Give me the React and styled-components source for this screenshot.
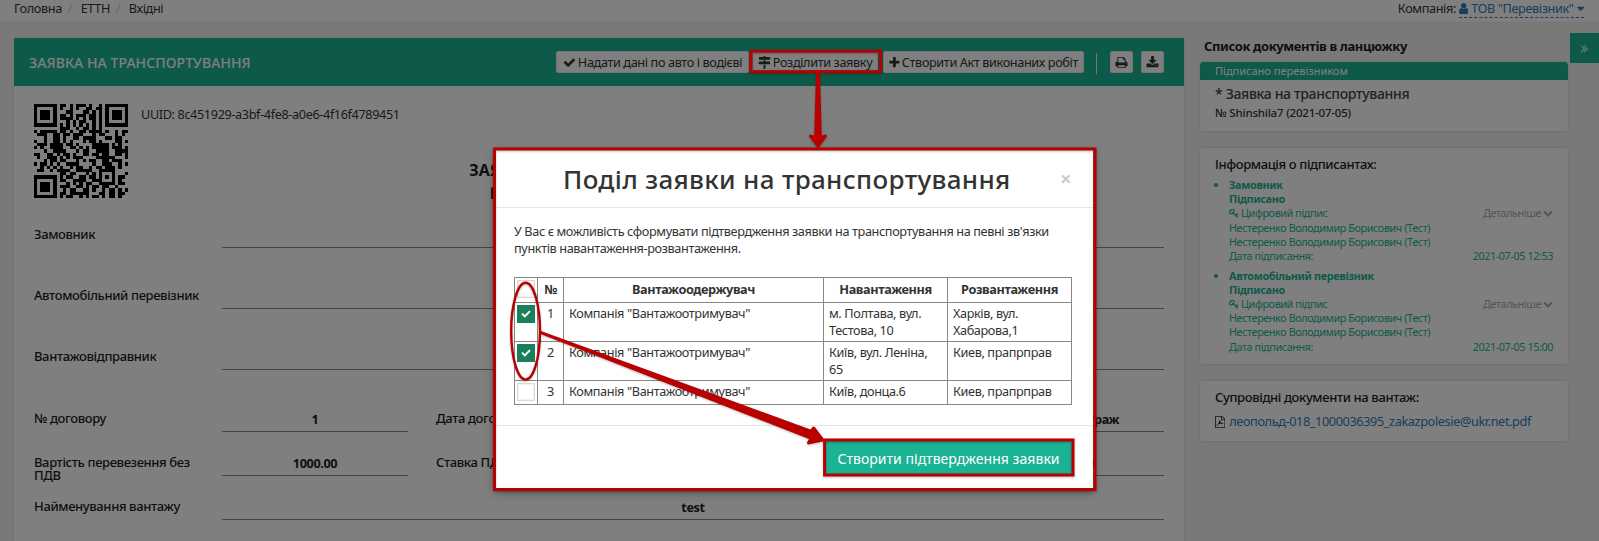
import React from "react";
import styled, { createGlobalStyle } from "styled-components";

const Global = createGlobalStyle`
  * { box-sizing: border-box; }
  html, body { margin: 0; height: 541px; overflow: hidden; }
  body {
    font-family: "Noto Sans", "Open Sans", sans-serif;
    font-size: 12.7px;
    line-height: 17px;
    letter-spacing: -0.38px;
    color: #333;
    background: #f3f3f4;
  }
`;

/* ---------- icons ---------- */

const ICONS = {
  check: "M1671 566q0 40-28 68l-724 724-136 136q-28 28-68 28t-68-28l-136-136-362-362q-28-28-28-68t28-68l136-136q28-28 68-28t68 28l294 295 656-657q28-28 68-28t68 28l136 136q28 28 28 68z",
  signs: "M1745 297q10 10 10 23t-10 23l-141 141q-28 28-68 28h-1344q-26 0-45-19t-19-45v-256q0-26 19-45t45-19h576v-64q0-26 19-45t45-19h128q26 0 45 19t19 45v64h512q40 0 68 28zm-977 919h256v512q0 26-19 45t-45 19h-128q-26 0-45-19t-19-45v-512zm832-448q26 0 45 19t19 45v256q0 26-19 45t-45 19h-1344q-40 0-68-28l-141-141q-10-10-10-23t10-23l141-141q28-28 68-28h512v-192h256v192h576z",
  plus: "M1600 736v192q0 40-28 68t-68 28h-416v416q0 40-28 68t-68 28h-192q-40 0-68-28t-28-68v-416h-416q-40 0-68-28t-28-68v-192q0-40 28-68t68-28h416v-416q0-40 28-68t68-28h192q40 0 68 28t28 68v416h416q40 0 68 28t28 68z",
  print: "M448 1536h896v-256h-896v256zm0-640h896v-384h-160q-40 0-68-28t-28-68v-160h-640v640zm1152 64q0-26-19-45t-45-19-45 19-19 45 19 45 45 19 45-19 19-45zm128 0v416q0 13-9.5 22.5t-22.5 9.5h-224v160q0 40-28 68t-68 28h-960q-40 0-68-28t-28-68v-160h-224q-13 0-22.5-9.5t-9.5-22.5v-416q0-79 56.5-135.5t135.5-56.5h64v-544q0-40 28-68t68-28h672q40 0 88 20t76 48l152 152q28 28 48 76t20 88v256h64q79 0 135.5 56.5t56.5 135.5z",
  download: "M1344 1344q0-26-19-45t-45-19-45 19-19 45 19 45 45 19 45-19 19-45zm256 0q0-26-19-45t-45-19-45 19-19 45 19 45 45 19 45-19 19-45zm128-224v320q0 40-28 68t-68 28h-1472q-40 0-68-28t-28-68v-320q0-40 28-68t68-28h465l135 136q58 56 136 56t136-56l136-136h464q40 0 68 28t28 68zm-325-569q17 41-14 70l-448 448q-18 19-45 19t-45-19l-448-448q-31-29-14-70 17-39 59-39h256v-448q0-26 19-45t45-19h256q26 0 45 19t19 45v448h256q42 0 59 39z",
  user: "M1536 1399q0 109-62.5 187t-150.5 78h-854q-88 0-150.5-78t-62.5-187q0-85 8.5-160.5t31.5-152 58.5-131 94-89 134.5-34.5q131 128 313 128t313-128q76 0 134.5 34.5t94 89 58.5 131 31.5 152 8.5 160.5zm-256-887q0 159-112.5 271.5t-271.5 112.5-271.5-112.5-112.5-271.5 112.5-271.5 271.5-112.5 271.5 112.5 112.5 271.5z",
  caret: "M1408 704q0 26-19 45l-448 448q-19 19-45 19t-45-19l-448-448q-19-19-19-45t19-45 45-19h896q26 0 45 19t19 45z",
  key: "M832 512q0-80-56-136t-136-56-136 56-56 136q0 42 19 83-41-19-83-19-80 0-136 56t-56 136 56 136 136 56 136-56 56-136q0-42-19-83 41 19 83 19 80 0 136-56t56-136zm851 704q0 17-49 66t-66 49q-9 0-28.5-16t-36.5-33-38.5-40-24.5-26l-96 96 220 220q28 28 28 68 0 42-39 81t-81 39q-40 0-68-28l-671-671q-176 131-365 131-163 0-265.5-102.5t-102.5-265.5q0-160 95-313t248-248 313-95q163 0 265.5 102.5t102.5 265.5q0 189-131 365l355 355 96-96q-3-3-26-24.5t-40-38.5-33-36.5-16-28.5q0-17 49-66t66-49q13 0 23 10 6 6 46 44.5t82 79.5 86.5 86 73 78 28.5 41z",
  chevron: "M1683 808l-742 741q-19 19-45 19t-45-19l-742-741q-19-19-19-45.5t19-45.5l166-165q19-19 45-19t45 19l531 531 531-531q19-19 45-19t45 19l166 165q19 19 19 45.5t-19 45.5z",
  pdf: "M1596 380q28 28 48 76t20 88v1152q0 40-28 68t-68 28h-1344q-40 0-68-28t-28-68v-1600q0-40 28-68t68-28h896q40 0 88 20t76 48zm-444-244v376h376q-10-29-22-41l-313-313q-12-12-41-22zm384 1528v-1024h-416q-40 0-68-28t-28-68v-416h-768v1536h1280zM800 640h110q20 230 110 330q110 110 330 130v90q-200 20-380-50q-170 20-330 90q-130 240-250 240l-50-60q60-130 230-220q160-250 230-550z",
  angles: "M979 960q0 13-10 23l-466 466q-10 10-23 10t-23-10l-50-50q-10-10-10-23t10-23l393-393-393-393q-10-10-10-23t10-23l50-50q10-10 23-10t23 10l466 466q10 10 10 23zm384 0q0 13-10 23l-466 466q-10 10-23 10t-23-10l-50-50q-10-10-10-23t10-23l393-393-393-393q-10-10-10-23t10-23l50-50q10-10 23-10t23 10l466 466q10 10 10 23z",
};

const Glyph = styled.svg`
  width: ${(p) => p.$w || p.$size}px;
  height: ${(p) => p.$size}px;
  flex: none;
  fill: currentColor;
`;

const Icon = ({ name, size = 13, trim = 0 }) => (
  <Glyph $size={size} $w={size * (1 - (2 * trim) / 1792)} viewBox={`${trim} 0 ${1792 - 2 * trim} 1792`}>
    <path d={ICONS[name]} />
  </Glyph>
);

/* ---------- page frame ---------- */

const Page = styled.div`
  position: relative;
  width: 1599px;
  height: 541px;
  overflow: hidden;
  white-space: nowrap;
`;

const TopBar = styled.div`
  display: flex;
  justify-content: space-between;
  height: 23px;
  padding: 0 15px 0 14px;
  background: #fff;
  border-bottom: 1px solid #e7eaec;
`;

const Breadcrumb = styled.div`
  display: flex;
  height: 17px;
  span + span::before { content: "/"; color: #ccc; padding: 0 8.500px 0 6px; }
`;

const Company = styled.div`
  display: flex;
  gap: 3px;
  height: 18px;
`;

const CompanyLink = styled.span`
  display: flex;
  align-items: center;
  gap: 3px;
  height: 18px;
  color: #337ab7;
  border-bottom: 1px dashed #337ab7;
`;

const Content = styled.div`
  display: flex;
  align-items: flex-start;
  gap: 16px;
  padding: 15px 31px 0 14px;
`;

const Panel = styled.main`
  width: 1170px;
  height: 520px;
  background: #fff;
  box-shadow: 0 0 3px #ddd;
`;

const PanelHeader = styled.header`
  display: flex;
  align-items: center;
  height: 48px;
  padding: 0 20px 0 15px;
  background: #1ab394;
  color: #fff;
`;

const PanelTitle = styled.h5`
  flex: 1;
  margin: 0;
  font-size: 14px;
  font-weight: 500;
  letter-spacing: 0.08px;
  text-transform: uppercase;
`;

const Tool = styled.button`
  display: flex;
  align-items: center;
  justify-content: center;
  gap: 2px;
  width: ${(p) => p.$w}px;
  height: 22px;
  margin: 0 0 0 ${(p) => p.$gap || 0}px;
  padding: 0;
  border: 1px solid #e7eaec;
  border-radius: 2px;
  background: #fff;
  color: #333;
  font: inherit;
  letter-spacing: inherit;
`;

const Divider = styled.i`
  width: 1px;
  height: 21px;
  margin: 2px 0 0 12px;
  background: #e7eaec;
`;

const PanelBody = styled.div`
  padding: 18px 20px 0;
`;

const Identity = styled.div`
  display: flex;
  gap: 13px;
  height: 55px;
  line-height: 21px;
`;

const Qr = styled.svg`
  width: 94px;
  height: 94px;
  flex: none;
`;

const Heading = styled.div`
  height: 69px;
  font-size: 16px;
  font-weight: 700;
  line-height: 23px;
  letter-spacing: 0;
  text-align: center;
  color: #222;
`;

const FieldRow = styled.div`
  display: flex;
  height: ${(p) => p.$h}px;
  line-height: 13px;
`;

const Label = styled.label`
  width: ${(p) => p.$w || 188}px;
  padding-right: 14px;
  margin-left: ${(p) => p.$gap || 0}px;
  font-size: 13px;
  font-weight: 500;
  color: #1c1c1c;
  white-space: normal;
`;

const Value = styled.div`
  ${(p) => (p.$w ? `width: ${p.$w}px;` : "flex: 1;")}
  height: 20px;
  padding-top: 1px;
  border-bottom: 1px solid #888;
  font-weight: 700;
  text-align: center;
  color: #222;
`;

/* ---------- sidebar ---------- */

const Sidebar = styled.aside`
  width: 368px;
`;

const SidebarTitle = styled.div`
  height: 24px;
  padding-left: 4px;
  font-size: 13px;
  font-weight: 700;
  line-height: 16px;
  letter-spacing: -0.38px;
  color: #222;
`;

const Card = styled.section`
  height: ${(p) => p.$h}px;
  margin-bottom: 17px;
  border-radius: 4px;
  background: #fff;
  box-shadow: 0 0 3px #ccc;
  overflow: hidden;
`;

const CardStatus = styled.div`
  height: 18px;
  padding-left: 15px;
  background: #1ab394;
  color: #fff;
  font-size: 11px;
  line-height: 18px;
  letter-spacing: 0;
`;

const CardBody = styled.div`
  padding: ${(p) => p.$top}px 15px 0;
`;

const DocName = styled.div`
  font-size: 14px;
  font-weight: 500;
  line-height: 20px;
  letter-spacing: -0.34px;
  color: #444;
`;

const DocNumber = styled.div`
  font-size: 11.5px;
  font-weight: 500;
  line-height: 17px;
  letter-spacing: -0.2px;
`;

const CardTitle = styled.div`
  height: ${(p) => p.$h}px;
  font-size: 13px;
  font-weight: 500;
  color: #1c1c1c;
`;

const Signers = styled.ul`
  margin: 0;
  padding: 0 0 0 14px;
  font-size: 10.8px;
  line-height: 14.2px;
  letter-spacing: -0.4px;
  color: #1ab394;
`;

const Signer = styled.li`
  margin-bottom: 5.6px;
  &::marker { font-size: 12px; }
`;

const SignLine = styled.div`
  display: flex;
  align-items: center;
  justify-content: space-between;
  height: 14.2px;
  font-weight: ${(p) => (p.$bold ? 700 : 400)};
  letter-spacing: ${(p) => (p.$bold ? "-0.3px" : "inherit")};
`;

const WithIcon = styled.span`
  display: flex;
  align-items: center;
  gap: 2px;
  color: ${(p) => (p.$muted ? "#aaa" : "inherit")};
`;

const FileLink = styled.div`
  display: flex;
  align-items: center;
  gap: 4px;
  color: #333;
  span { color: #337ab7; }
`;

const SideToggle = styled.div`
  position: absolute;
  right: 0;
  top: 33px;
  display: flex;
  align-items: center;
  justify-content: center;
  width: 29px;
  height: 30px;
  background: #1ab394;
  color: #fff;
`;

/* ---------- modal ---------- */

const Backdrop = styled.div`
  position: absolute;
  inset: 0;
  background: rgba(0, 0, 0, 0.5);
`;

const Modal = styled.div`
  position: absolute;
  left: 495px;
  top: 149px;
  width: 598px;
  height: 340px;
  background: #fff;
  box-shadow: 0 3px 9px rgba(0, 0, 0, 0.4);
  white-space: normal;
`;

const ModalHeader = styled.div`
  display: flex;
  align-items: center;
  height: 59px;
  padding: 2px 22px 0 68px;
  border-bottom: 1px solid #e5e5e5;
`;

const ModalTitle = styled.h4`
  flex: 1;
  margin: 0;
  font-size: 26px;
  font-weight: 500;
  line-height: 30px;
  letter-spacing: 0.34px;
  white-space: nowrap;
`;

const Close = styled.span`
  font-size: 20px;
  font-weight: 700;
  line-height: 20px;
  color: #ccc;
`;

const ModalBody = styled.div`
  height: 217px;
  padding: 15px 19px 0;
`;

const Intro = styled.p`
  height: 54px;
  margin: 0;
  line-height: 17px;
`;

const Table = styled.table`
  width: 558px;
  table-layout: fixed;
  border-collapse: collapse;
  line-height: 17px;
`;

const Cell = styled.td`
  height: ${(p) => p.$h}px;
  padding: ${(p) => (p.$box ? "2px 0 0 2px" : p.$head ? "3px 5px 0" : "2px 5px 0")};
  border: 1px solid #888;
  vertical-align: top;
  text-align: ${(p) => (p.$center ? "center" : "left")};
  font-weight: ${(p) => (p.$head ? 700 : 400)};
`;

const Checkbox = styled.span`
  display: flex;
  align-items: center;
  justify-content: center;
  width: 18px;
  height: 18px;
  border: 1px solid ${(p) => (p.$on ? "#1c7f5c" : "#ddd8d0")};
  background: ${(p) => (p.$on ? "#1c7f5c" : "#fff")};
  box-shadow: ${(p) => (p.$on ? "none" : "inset 0 0 0 1px #f5f2ee")};
`;

const ModalFooter = styled.div`
  display: flex;
  justify-content: flex-end;
  padding: 14px 21px 0;
  border-top: 1px solid #e5e5e5;
`;

const Submit = styled.button`
  width: 246px;
  height: 34px;
  padding: 2px 1px 0 0;
  border: 0;
  background: #1ab394;
  color: #fff;
  font: inherit;
  font-size: 14px;
  letter-spacing: 0.05px;
  white-space: nowrap;
`;

const Annotations = styled.svg`
  position: absolute;
  inset: 0;
  width: 1599px;
  height: 541px;
  filter: drop-shadow(0 1px 1px rgba(0, 0, 0, 0.25));
`;

/* ---------- data ---------- */

const QR_ROWS = [
  "#######.##.#.###.#..#.#######",
  "#.....#.#..#.#..##.##.#.....#",
  "#.###.#...##...##.#.#.#.###.#",
  "#.###.#.##.#.###.##.#.#.###.#",
  "#.###.#.####.#.#.##.#.#.###.#",
  "#.....#...#.#.##..#.#.#.....#",
  "#######.#.#.#.#.#.#.#.#######",
  "........###..#.##.#.#........",
  "#.#####.##.#..##.####.#..#.##",
  ".###..##.##.###...#.##...#.#.",
  "...#..##.#..##.####...##.##..",
  "#..#..##.#.#...#.##.#....##.#",
  ".###.####.##.#....#####.#.#..",
  "#.#..####..##.#.#.#####.###.#",
  "...#..####...#.##..####..####",
  "##..##.#.##.#..##.##.##..##.#",
  ".#..###.#.#.###....######...#",
  "...#.##.##...#.#.##..##.###..",
  "#.##.#.#..####....#..###..#.#",
  "..#.#.#.#..#.##..#.##.###.#..",
  ".##..#.####..#####..#####....",
  "........##.##...#.#.#...#...#",
  "#######.#.##..##.##.#.#.#.##.",
  "#.....#.##..####..###...#.#..",
  "#.###.#...#.#.#.##..#####.##.",
  "#.###.#.###..##.#.##.##..#...",
  "#.###.#..#.##..##.#..#.##.#.#",
  "#.....#.##.######...##.##.##.",
  "#######.#.##..#.#.##.#.##.#..",
];

const ROWS = [
  { on: true, n: 1, h: 39, from: "м. Полтава, вул. Тестова, 10", to: "Харків, вул. Хабарова,1" },
  { on: true, n: 2, h: 39, from: "Київ, вул. Леніна, 65", to: "Киев, прапрправ" },
  { on: false, n: 3, h: 24, from: "Київ, донца.6", to: "Киев, прапрправ" },
];

const SIGNERS = [
  { role: "Замовник", date: "2021-07-05 12:53" },
  { role: "Автомобільний перевізник", date: "2021-07-05 15:00" },
];

const SIGNER_NAME = "Нестеренко Володимир Борисович (Тест)";

const QrCode = () => (
  <Qr viewBox="0 0 29 29" shapeRendering="crispEdges">
    {QR_ROWS.map((row, y) =>
      [...row].map((c, x) => (c === "#" ? <rect key={`${x}-${y}`} x={x} y={y} width="1" height="1" /> : null))
    )}
  </Qr>
);

const CheckMark = () => (
  <svg width="10" height="8" viewBox="0 0 10 8" fill="none" stroke="#fff" strokeWidth="1.9">
    <path d="M1 3.600l2.800 2.800L9 1.200" />
  </svg>
);

export default function App() {
  return (
    <Page>
      <Global />
      <TopBar>
        <Breadcrumb>
          <span>Головна</span>
          <span>ЕТТН</span>
          <span>Вхідні</span>
        </Breadcrumb>
        <Company>
          Компанія:
          <CompanyLink>
            <Icon name="user" trim={250} />
            ТОВ "Перевізник"
            <Icon name="caret" trim={384} />
          </CompanyLink>
        </Company>
      </TopBar>

      <Content>
        <Panel>
          <PanelHeader>
            <PanelTitle>Заявка на транспортування</PanelTitle>
            <Tool $w={193}><Icon name="check" />Надати дані по авто і водієві</Tool>
            <Tool $w={126} $gap={3}><Icon name="signs" />Розділити заявку</Tool>
            <Tool $w={201} $gap={5}><Icon name="plus" trim={150} />Створити Акт виконаних робіт</Tool>
            <Divider />
            <Tool $w={23} $gap={13}><Icon name="print" /></Tool>
            <Tool $w={23} $gap={8}><Icon name="download" /></Tool>
          </PanelHeader>
          <PanelBody>
            <Identity>
              <QrCode />
              <span>UUID: 8c451929-a3bf-4fe8-a0e6-4f16f4789451</span>
            </Identity>
            <Heading>
              <div>ЗАЯВКА НА ТРАНСПОРТУВАННЯ</div>
              <div>№ Shinshila7 від 2021-07-05</div>
            </Heading>
            <FieldRow $h={61}><Label>Замовник</Label><Value /></FieldRow>
            <FieldRow $h={61}><Label>Автомобільний перевізник</Label><Value /></FieldRow>
            <FieldRow $h={62}><Label>Вантажовідправник</Label><Value /></FieldRow>
            <FieldRow $h={44}>
              <Label>№ договору</Label><Value $w={186}>1</Value>
              <Label $gap={28} $w={140}>Дата договору</Label><Value $w={186} />
              <Label $gap={28} $w={210} /><Value>кілометраж</Value>
            </FieldRow>
            <FieldRow $h={44}>
              <Label>Вартість перевезення без ПДВ</Label><Value $w={186}>1000.00</Value>
              <Label $gap={28} $w={140}>Ставка ПДВ</Label><Value $w={186} />
              <Label $gap={28} $w={210} /><Value>0.00</Value>
            </FieldRow>
            <FieldRow $h={44}><Label>Найменування вантажу</Label><Value>test</Value></FieldRow>
          </PanelBody>
        </Panel>

        <Sidebar>
          <SidebarTitle>Список документів в ланцюжку</SidebarTitle>
          <Card $h={69}>
            <CardStatus>Підписано перевізником</CardStatus>
            <CardBody $top={4}>
              <DocName>* Заявка на транспортування</DocName>
              <DocNumber>№ Shinshila7 (2021-07-05)</DocNumber>
            </CardBody>
          </Card>
          <Card $h={216}>
            <CardBody $top={8}>
              <CardTitle $h={22}>Інформація о підписантах:</CardTitle>
              <Signers>
                {SIGNERS.map((s) => (
                  <Signer key={s.role}>
                    <SignLine $bold>{s.role}</SignLine>
                    <SignLine $bold>Підписано</SignLine>
                    <SignLine>
                      <WithIcon><Icon name="key" size={10} />Цифровий підпис</WithIcon>
                      <WithIcon $muted>Детальніше<Icon name="chevron" size={10} /></WithIcon>
                    </SignLine>
                    <SignLine>{SIGNER_NAME}</SignLine>
                    <SignLine>{SIGNER_NAME}</SignLine>
                    <SignLine><span>Дата підписання:</span><span>{s.date}</span></SignLine>
                  </Signer>
                ))}
              </Signers>
            </CardBody>
          </Card>
          <Card $h={60}>
            <CardBody $top={8}>
              <CardTitle $h={24}>Супровідні документи на вантаж:</CardTitle>
              <FileLink><Icon name="pdf" size={12} trim={128} /><span>леопольд-018_1000036395_zakazpolesie@ukr.net.pdf</span></FileLink>
            </CardBody>
          </Card>
        </Sidebar>
      </Content>
      <SideToggle><Icon name="angles" size={13} /></SideToggle>

      <Backdrop />

      <Modal>
        <ModalHeader>
          <ModalTitle>Поділ заявки на транспортування</ModalTitle>
          <Close>×</Close>
        </ModalHeader>
        <ModalBody>
          <Intro>
            У Вас є можливість сформувати підтвердження заявки на транспортування на певні зв'язки
            <br />
            пунктів навантаження-розвантаження.
          </Intro>
          <Table>
            <colgroup>
              <col width="23" /><col width="26" /><col width="260" /><col width="124" /><col width="124" />
            </colgroup>
            <tbody>
              <tr>
                <Cell $h={25} $box><Checkbox /></Cell>
                <Cell $h={25} $head $center as="th">№</Cell>
                <Cell $h={25} $head $center as="th">Вантажоодержувач</Cell>
                <Cell $h={25} $head $center as="th">Навантаження</Cell>
                <Cell $h={25} $head $center as="th">Розвантаження</Cell>
              </tr>
              {ROWS.map((r) => (
                <tr key={r.n}>
                  <Cell $h={r.h} $box><Checkbox $on={r.on}>{r.on && <CheckMark />}</Checkbox></Cell>
                  <Cell $h={r.h} $center>{r.n}</Cell>
                  <Cell $h={r.h}>Компанія "Вантажоотримувач"</Cell>
                  <Cell $h={r.h}>{r.from}</Cell>
                  <Cell $h={r.h}>{r.to}</Cell>
                </tr>
              ))}
            </tbody>
          </Table>
        </ModalBody>
        <ModalFooter>
          <Submit>Створити підтвердження заявки</Submit>
        </ModalFooter>
      </Modal>

      <Annotations viewBox="0 0 1599 541" fill="none" stroke="#b80000" strokeWidth="3">
        <rect x="751" y="51.2" width="129.5" height="20.4" />
        <rect x="494.5" y="149" width="600.5" height="340.5" />
        <rect x="824.6" y="440" width="248.4" height="35" />
        <ellipse cx="525.6" cy="331.2" rx="14.4" ry="48.4" strokeWidth="2.4" />
        <g fill="#b80000" stroke="none">
          <path d="M816 73h4l1.800 62.500l4.500-1.300l.7 2.300L818 148.500L809 136.500l.7-2.300l4.500 1.300z" />
          <path d="M541 331l269.500 98.500l2.500-3l1.800.6L825.500 441l-17.500 3.500l-1.200-1.700l2.200-3.800L540.500 334z" />
        </g>
      </Annotations>
    </Page>
  );
}
